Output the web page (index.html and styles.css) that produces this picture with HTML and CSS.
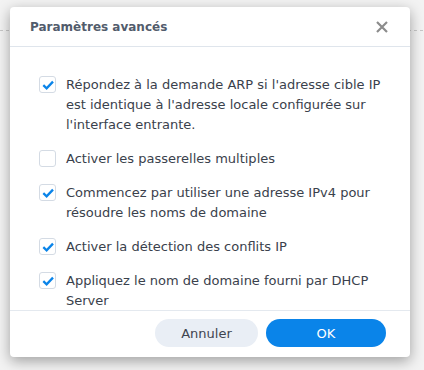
FILE: index.html
```html
<!DOCTYPE html>
<html>
<head>
<title>Paramètres avancés</title>
<meta charset="utf-8"/>
<link rel="stylesheet" href="styles.css">
</head>
<body>
<div class="backdrop">
<div class="dialog">
<div class="head">
<div class="title">Paramètres avancés</div>
<div class="close">
<svg width="12" height="12" viewBox="0 0 12 12"><path d="M1 1L11 11M11 1L1 11" stroke="#8c8c8c" stroke-width="2.2"/></svg>
</div>
</div>
<div class="body">
<label class="item">
<span class="box on"><svg width="14" height="14" viewBox="0 0 14 14"><path d="M2.3 7.2L5.6 10.3L12 3.6" fill="none" stroke="#0a84e9" stroke-width="2.3"/></svg></span>
<span class="text">Répondez à la demande ARP si l'adresse cible IP est identique à l'adresse locale configurée sur l'interface entrante.</span>
</label>
<label class="item">
<span class="box"></span>
<span class="text">Activer les passerelles multiples</span>
</label>
<label class="item">
<span class="box on"><svg width="14" height="14" viewBox="0 0 14 14"><path d="M2.3 7.2L5.6 10.3L12 3.6" fill="none" stroke="#0a84e9" stroke-width="2.3"/></svg></span>
<span class="text">Commencez par utiliser une adresse IPv4 pour résoudre les noms de domaine</span>
</label>
<label class="item">
<span class="box on"><svg width="14" height="14" viewBox="0 0 14 14"><path d="M2.3 7.2L5.6 10.3L12 3.6" fill="none" stroke="#0a84e9" stroke-width="2.3"/></svg></span>
<span class="text">Activer la détection des conflits IP</span>
</label>
<label class="item">
<span class="box on"><svg width="14" height="14" viewBox="0 0 14 14"><path d="M2.3 7.2L5.6 10.3L12 3.6" fill="none" stroke="#0a84e9" stroke-width="2.3"/></svg></span>
<span class="text">Appliquez le nom de domaine fourni par DHCP Server</span>
</label>
</div>
<div class="foot">
<div class="btn cancel">Annuler</div>
<div class="btn ok">OK</div>
</div>
</div>
</div>
</body>
</html>
```
FILE: styles.css
```css
body {
margin: 0;
background-color: #f3f3f3;
font-family: 'DejaVu Sans', Verdana, sans-serif;
}
.backdrop {
height: 370px;
padding: 7px 14px 0 10px;
box-sizing: border-box;
background: linear-gradient(to right, #c8c8c8 50%, transparent 50%) 0 30px / 6px 1px repeat-x;
}
.dialog {
width: 400px;
height: 350px;
background-color: white;
border-radius: 4px;
box-shadow: 0 4px 14px rgba(0, 0, 0, 0.35);
display: flex;
flex-direction: column;
overflow: hidden;
}
.head {
height: 39px;
flex: none;
display: flex;
align-items: center;
justify-content: space-between;
padding: 0 22px 0 20px;
border-bottom: 1px solid #dfe5ec;
}
.title {
font-size: 12px;
font-weight: bold;
color: #525c6c;
padding-top: 1px;
}
.close {
display: flex;
}
.body {
flex: 1;
overflow: hidden;
padding: 28px 22px 0 29px;
display: flex;
flex-direction: column;
gap: 14px;
}
.item {
display: flex;
gap: 10px;
font-size: 13px;
line-height: 20px;
color: #3a414c;
}
.box {
flex: none;
width: 15px;
height: 15px;
margin-top: 1px;
border: 1px solid #d4dbe4;
border-radius: 3px;
display: flex;
align-items: center;
justify-content: center;
}
.text {
flex: 1;
}
.foot {
height: 47px;
flex: none;
border-top: 1px solid #e4e9ef;
display: flex;
justify-content: flex-end;
align-items: center;
gap: 8px;
padding: 0 24px 2px 0;
box-sizing: border-box;
}
.btn {
height: 28px;
border-radius: 14px;
font-size: 13px;
display: flex;
align-items: center;
justify-content: center;
}
.cancel {
width: 103px;
background-color: #e9eef5;
color: #3e4450;
}
.ok {
width: 120px;
background-color: #0a84e9;
color: white;
}
```
